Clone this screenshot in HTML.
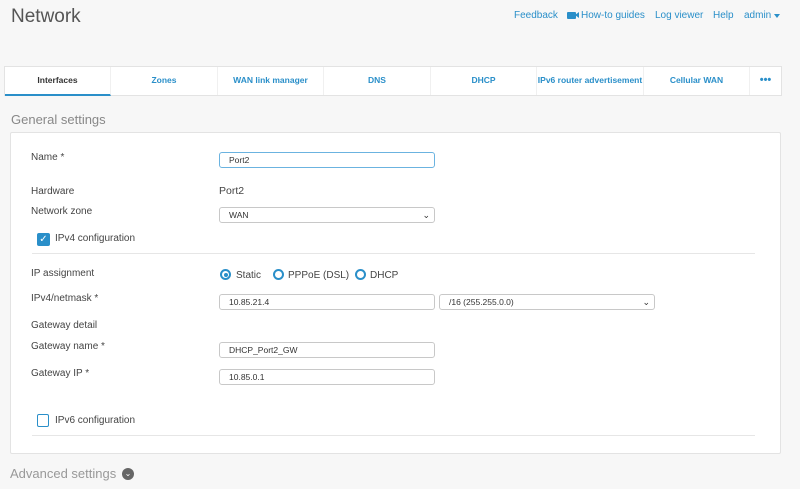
<!DOCTYPE html>
<html><head><meta charset="utf-8"><style>
*{box-sizing:border-box;margin:0;padding:0}
body{width:800px;height:489px;background:#f7f7f7;font-family:"Liberation Sans",sans-serif;position:relative;overflow:hidden;color:#333}
.a{position:absolute;white-space:nowrap}
.lnk{color:#2a8fc9;font-size:10px}
.tabs{position:absolute;left:4px;top:66px;width:778px;height:30px;background:#fff;border:1px solid #e3e3e3}
.tab{position:absolute;top:0;height:28px;line-height:27px;text-align:center;font-size:8.5px;font-weight:bold;color:#2a8fc9;border-right:1px solid #f0f0f0}
.panel{position:absolute;left:10px;top:132px;width:771px;height:322px;background:#fff;border:1px solid #e3e3e3;border-radius:2px}
.lab{position:absolute;font-size:10px;color:#444;white-space:nowrap}
.inp{position:absolute;height:16px;border:1px solid #c8c8c8;border-radius:3px;background:#fff;font-size:8.5px;line-height:14px;padding-left:9px;color:#333}
.sep{position:absolute;height:1px;background:#e6e6e6}
.rad{position:absolute;width:11px;height:11px;border:2px solid #2a8fc9;border-radius:50%}
</style></head><body>
<div class="a" style="left:11px;top:6px;font-size:19px;color:#555">Network</div>
<div class="a lnk" style="left:514px;top:10px">Feedback</div>
<div class="a" style="left:567px;top:12px;width:9px;height:7px;background:#2a8fc9;border-radius:1px"></div>
<div class="a" style="left:575px;top:12px;width:0;height:0;border-top:3.5px solid transparent;border-bottom:3.5px solid transparent;border-right:4px solid #2a8fc9"></div>
<div class="a lnk" style="left:581px;top:10px">How-to guides</div>
<div class="a lnk" style="left:655px;top:10px">Log viewer</div>
<div class="a lnk" style="left:713px;top:10px">Help</div>
<div class="a lnk" style="left:744px;top:10px">admin</div>
<div class="a" style="left:774px;top:14px;border-left:3px solid transparent;border-right:3px solid transparent;border-top:4px solid #2a8fc9"></div>
<div class="tabs">
<div class="tab" style="left:0;width:106px;color:#333;border-bottom:2px solid #2a8fc9;height:29px">Interfaces</div>
<div class="tab" style="left:106px;width:107px">Zones</div>
<div class="tab" style="left:213px;width:106px">WAN link manager</div>
<div class="tab" style="left:319px;width:107px">DNS</div>
<div class="tab" style="left:426px;width:106px">DHCP</div>
<div class="tab" style="left:532px;width:107px">IPv6 router advertisement</div>
<div class="tab" style="left:639px;width:106px">Cellular WAN</div>
<div class="tab" style="left:745px;width:31px;border:none;font-size:11px;line-height:27px">•••</div>
</div>
<div class="a" style="left:11px;top:112px;font-size:13px;color:#888">General settings</div>
<div class="panel"></div>
<div class="lab" style="left:31px;top:152px">Name *</div>
<div class="inp" style="left:219px;top:152px;width:216px;border-color:#6bb3e0">Port2</div>
<div class="lab" style="left:31px;top:186px">Hardware</div>
<div class="lab" style="left:219px;top:185px;font-size:10.5px">Port2</div>
<div class="lab" style="left:31px;top:206px">Network zone</div>
<div class="inp" style="left:219px;top:207px;width:216px">WAN<span style="position:absolute;right:4px;top:0;font-size:9px">⌄</span></div>
<div class="a" style="left:37px;top:233px;width:13px;height:13px;background:#2a8fc9;border-radius:2px;color:#fff;font-size:10px;line-height:13px;text-align:center">✓</div>
<div class="lab" style="left:55px;top:233px">IPv4 configuration</div>
<div class="sep" style="left:32px;top:253px;width:723px"></div>
<div class="lab" style="left:31px;top:268px">IP assignment</div>
<div class="rad" style="left:220px;top:269px"></div><div class="a" style="left:223.5px;top:272.5px;width:4px;height:4px;border-radius:50%;background:#2a8fc9"></div>
<div class="lab" style="left:236px;top:270px">Static</div>
<div class="rad" style="left:273px;top:269px"></div>
<div class="lab" style="left:288px;top:270px">PPPoE (DSL)</div>
<div class="rad" style="left:355px;top:269px"></div>
<div class="lab" style="left:370px;top:270px">DHCP</div>
<div class="lab" style="left:31px;top:293px">IPv4/netmask *</div>
<div class="inp" style="left:219px;top:294px;width:216px">10.85.21.4</div>
<div class="inp" style="left:439px;top:294px;width:216px">/16 (255.255.0.0)<span style="position:absolute;right:4px;top:0;font-size:9px">⌄</span></div>
<div class="lab" style="left:31px;top:320px">Gateway detail</div>
<div class="lab" style="left:31px;top:341px">Gateway name *</div>
<div class="inp" style="left:219px;top:342px;width:216px">DHCP_Port2_GW</div>
<div class="lab" style="left:31px;top:368px">Gateway IP *</div>
<div class="inp" style="left:219px;top:369px;width:216px">10.85.0.1</div>
<div class="a" style="left:37px;top:414px;width:12px;height:13px;border:1.5px solid #2a8fc9;border-radius:2px"></div>
<div class="lab" style="left:55px;top:415px">IPv6 configuration</div>
<div class="sep" style="left:32px;top:435px;width:723px"></div>
<div class="a" style="left:10px;top:466px;font-size:13px;color:#999">Advanced settings</div>
<div class="a" style="left:122px;top:468px;width:12px;height:12px;border-radius:50%;background:#666;color:#fff;font-size:8px;line-height:11px;text-align:center">⌄</div>
</body></html>
